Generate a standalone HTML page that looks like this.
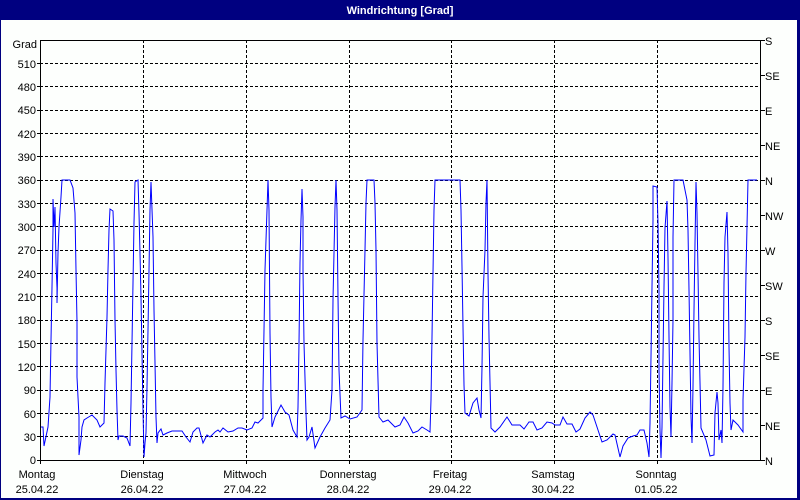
<!DOCTYPE html>
<html><head><meta charset="utf-8"><style>
html,body{margin:0;padding:0;width:800px;height:500px;overflow:hidden;background:#fff}
svg{display:block}
text{font-family:"Liberation Sans",sans-serif;font-size:11px;fill:#000}
</style></head><body>
<svg width="800" height="500" viewBox="0 0 800 500" xmlns="http://www.w3.org/2000/svg" shape-rendering="crispEdges">
<rect x="0" y="0" width="800" height="500" fill="#000080"/>
<rect x="1" y="20" width="796" height="478" fill="#fdfffd"/>
<text x="400" y="14" text-anchor="middle" style="fill:#fff;font-weight:bold">Windrichtung [Grad]</text>
<g stroke="#000" stroke-width="1" stroke-dasharray="3,2" fill="none">
<path d="M40 436.5H760M40 413.5H760M40 390.5H760M40 366.5H760M40 343.5H760M40 320.5H760M40 296.5H760M40 273.5H760M40 250.5H760M40 226.5H760M40 203.5H760M40 180.5H760M40 156.5H760M40 133.5H760M40 110.5H760M40 86.5H760M40 63.5H760"/>
<path d="M143.5 40V460M246.5 40V460M349.5 40V460M451.5 40V460M554.5 40V460M657.5 40V460"/>
</g>
<g stroke="#000" stroke-width="1" fill="none">
<path d="M40.5 40V461M760.5 40V461M40 40.5H761M40 460.5H761"/>
<path d="M37 460.5H40M37 436.5H40M37 413.5H40M37 390.5H40M37 366.5H40M37 343.5H40M37 320.5H40M37 296.5H40M37 273.5H40M37 250.5H40M37 226.5H40M37 203.5H40M37 180.5H40M37 156.5H40M37 133.5H40M37 110.5H40M37 86.5H40M37 63.5H40"/>
<path d="M760 40.5H765M760 75.5H765M760 110.5H765M760 145.5H765M760 180.5H765M760 215.5H765M760 250.5H765M760 285.5H765M760 320.5H765M760 355.5H765M760 390.5H765M760 425.5H765M760 460.5H765"/>
<path d="M40.5 460V464M143.5 460V464M246.5 460V464M349.5 460V464M451.5 460V464M554.5 460V464M657.5 460V464"/>
</g>
<g text-anchor="end">
<text x="37" y="48">Grad</text>
<text x="36" y="68">510</text><text x="36" y="91">480</text><text x="36" y="114">450</text><text x="36" y="138">420</text><text x="36" y="161">390</text><text x="36" y="184">360</text><text x="36" y="208">330</text><text x="36" y="231">300</text><text x="36" y="254">270</text><text x="36" y="278">240</text><text x="36" y="301">210</text><text x="36" y="324">180</text><text x="36" y="348">150</text><text x="36" y="371">120</text><text x="36" y="394">90</text><text x="36" y="418">60</text><text x="36" y="441">30</text><text x="36" y="464">0</text>
</g>
<g>
<text x="765" y="45">S</text><text x="765" y="80">SE</text><text x="765" y="115">E</text><text x="765" y="150">NE</text><text x="765" y="185">N</text><text x="765" y="220">NW</text><text x="765" y="255">W</text><text x="765" y="290">SW</text><text x="765" y="325">S</text><text x="765" y="360">SE</text><text x="765" y="395">E</text><text x="765" y="430">NE</text><text x="765" y="465">N</text>
</g>
<g text-anchor="middle">
<text x="37" y="478">Montag</text><text x="37" y="493">25.04.22</text>
<text x="142" y="478">Dienstag</text><text x="142" y="493">26.04.22</text>
<text x="245" y="478">Mittwoch</text><text x="245" y="493">27.04.22</text>
<text x="348" y="478">Donnerstag</text><text x="348" y="493">28.04.22</text>
<text x="450" y="478">Freitag</text><text x="450" y="493">29.04.22</text>
<text x="553" y="478">Samstag</text><text x="553" y="493">30.04.22</text>
<text x="656" y="478">Sonntag</text><text x="656" y="493">01.05.22</text>
</g>
<polyline fill="none" stroke="#0000ff" stroke-width="1" shape-rendering="auto" points="
41,427 43,427 44,446 48,427 50,397 51,340 52,287 53,230 53,199 54,227 55,207 56,263 57,288 57,303 58,253 59,227 61,197 62,180 70,180 73,188 75,213 76,270 77,322 77,377 79,417 79,455 81,440 82,427 84,420 87,418 92,415 97,420 100,427 104,423 105,383 107,317 108,270 109,230 110,209 113,211 114,240 115,320 116,370 117,410 118,440 119,436 123,436 127,438 130,446 131,403 132,343 133,283 134,223 135,182 138,180 139,213 140,253 141,297 142,353 143,410 144,457 145,443 146,433 147,387 148,330 149,270 150,210 151,182 153,237 154,310 155,363 156,417 157,443 158,433 161,429 163,435 167,433 172,431 182,431 186,437 190,442 193,432 197,428 199,428 203,443 207,435 210,437 215,432 218,430
220,432 223,428 228,432 233,431 238,428 242,428 247,430 252,428 255,422 258,423 263,418 263,390 264,330 265,270 267,210 268,180 269,210 270,333 271,397 272,427 275,417 281,405 285,412 289,415 293,430 297,437 298,407 299,343 300,263 301,220 302,189 303,217 303,270 304,343 306,413 307,440 309,437 312,427 315,448 320,437 325,428 330,420 332,390 333,300 334,253 335,207 336,180 337,210 338,297 339,370 341,418 345,416 350,419 357,417 362,410 363,340 364,295 365,250 366,203 367,180 374,180 375,203 376,250 377,343 379,417 383,422 388,420 395,427 400,425
404,417 408,423 413,433 418,431 422,427 427,430 430,432 431,400 432,337 433,273 434,210 435,180 460,180 461,210 462,267 463,327 464,385 465,413 469,416 473,403 477,398 479,410 481,418 482,367 483,297 485,250 486,203 487,180 488,273 489,337 491,428 495,432 500,427 507,417 512,425 520,425 524,429 529,422 533,422 537,430 542,428 547,422 552,423 555,425 560,425 563,417 567,424 572,424 576,432 580,429
585,418 590,412 593,415 602,442 607,440 613,434 615,435 620,457 623,446 628,438 633,436 637,435 640,430 644,430 647,443 649,457 650,423 651,357 652,287 653,220 653,186 657,187 658,223 659,290 659,370 660,430 661,458 662,427 663,357 664,287 665,228 667,201 668,257 669,337 670,407 671,437 672,383 673,320 673,237 674,180 683,180 687,200 688,230 689,290 690,353 691,417 692,443 693,387 694,310 695,243 696,182 697,213 698,273 699,337 701,428 706,440 710,456 714,455 715,413 717,392 718,403 719,440 721,430 722,443 723,387 724,283 725,237 727,212 728,253 729,347 730,403 731,430 733,420 738,425 743,432 743,400 745,337 746,273 748,180 757,180"/>
</svg>
</body></html>
